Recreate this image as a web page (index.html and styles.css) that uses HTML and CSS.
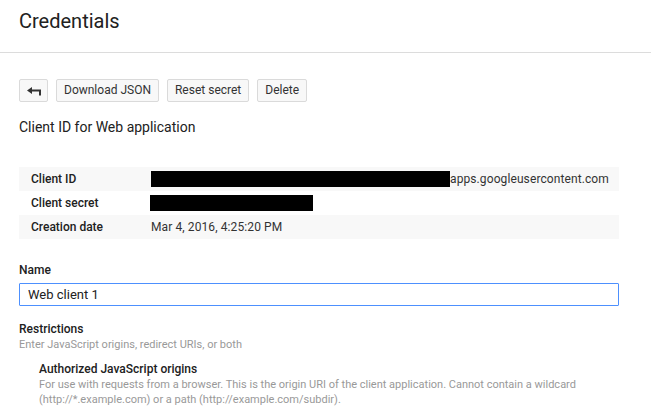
FILE: index.html
```html
<!DOCTYPE html>
<html>
<head>
<meta charset="utf-8">
<link rel="stylesheet" href="styles.css">
</head>
<body>
<header class="page-header">
  <h1 class="title">Credentials</h1>
</header>
<main class="content">
  <div class="toolbar">
    <button class="btn btn-back" aria-label="Back">
      <svg width="14" height="9" viewBox="0 0 14 9"><path d="M0 3.5 L5 0 L5 2.5 L14 2.5 L14 8.5 L12 8.5 L12 4.5 L5 4.5 L5 7 Z" fill="#333"/></svg>
    </button>
    <button class="btn">Download JSON</button>
    <button class="btn">Reset secret</button>
    <button class="btn">Delete</button>
  </div>
  <h2 class="subtitle">Client ID for Web application</h2>
  <div class="info">
    <div class="info-row shaded">
      <div class="info-label">Client ID</div>
      <div class="info-value"><span class="redact redact-id"></span>apps.googleusercontent.com</div>
    </div>
    <div class="info-row">
      <div class="info-label">Client secret</div>
      <div class="info-value"><span class="redact redact-secret"></span></div>
    </div>
    <div class="info-row shaded">
      <div class="info-label">Creation date</div>
      <div class="info-value">Mar 4, 2016, 4:25:20 PM</div>
    </div>
  </div>
  <label class="field-label" for="name">Name</label>
  <input id="name" class="text-input" type="text" value="Web client 1">
  <div class="section-title">Restrictions</div>
  <div class="hint">Enter JavaScript origins, redirect URIs, or both</div>
  <div class="sub-section">
    <div class="sub-title">Authorized JavaScript origins</div>
    <div class="hint hint-block">For use with requests from a browser. This is the origin URI of the client application. Cannot contain a wildcard (http://*.example.com) or a path (http://example.com/subdir).</div>
  </div>
</main>
</body>
</html>
```
FILE: styles.css
```css
html, body {
  margin: 0;
  padding: 0;
  background: #fff;
  font-family: Roboto, "Liberation Sans", Arial, sans-serif;
  color: #212121;
}
.page-header {
  height: 53px;
  border-bottom: 1px solid #dcdcdc;
  padding: 0 19px;
  box-sizing: border-box;
}
.title {
  margin: 0;
  padding-top: 8px;
  font-size: 20px;
  font-weight: 400;
  line-height: 26px;
  color: #212121;
}
.content {
  width: 600px;
  padding: 26px 19px 0;
}
.toolbar {
  display: flex;
  gap: 8px;
}
.btn {
  height: 23px;
  box-sizing: border-box;
  border: 1px solid #dadada;
  border-radius: 2px;
  background: #f8f8f8;
  font-family: inherit;
  font-size: 12px;
  color: #333;
  padding: 0 7px;
  line-height: 21px;
  margin: 0;
}
.btn-back {
  width: 29px;
  display: flex;
  align-items: center;
  justify-content: center;
  padding: 0;
}
.btn-back svg { display: block; margin-top: 1px; }
.subtitle {
  margin: 16px 0 0;
  font-size: 14px;
  font-weight: 400;
  line-height: 18px;
  color: #212121;
}
.info {
  margin-top: 31px;
}
.info-row {
  display: flex;
  height: 24px;
  align-items: center;
  font-size: 12px;
}
.info-row.shaded { background: #f8f8f8; }
.info-label {
  width: 120px;
  padding-left: 12px;
  font-weight: 500;
  color: #212121;
}
.info-value {
  display: flex;
  align-items: center;
  color: #333;
  letter-spacing: 0.1px;
}
.redact {
  display: inline-block;
  background: #000;
  height: 16px;
}
.redact-id { width: 299px; margin-left: 0; }
.redact-secret { width: 163px; margin-left: -1px; }
.field-label {
  display: block;
  margin-top: 23px;
  font-size: 12px;
  font-weight: 500;
  line-height: 16px;
}
.text-input {
  display: block;
  width: 600px;
  height: 23px;
  box-sizing: border-box;
  margin-top: 5px;
  border: 1px solid #4d90fe;
  border-radius: 1px;
  padding: 0 8px;
  font-family: inherit;
  font-size: 13px;
  color: #212121;
  outline: none;
}
.section-title {
  margin-top: 15px;
  font-size: 12px;
  font-weight: 500;
  line-height: 16px;
}
.hint {
  font-size: 11px;
  line-height: 15px;
  color: #999;
}
.sub-section {
  padding-left: 20px;
  margin-top: 10px;
}
.sub-title {
  font-size: 12px;
  font-weight: 500;
  line-height: 15px;
}
.hint-block {
  width: 560px;
}
```
